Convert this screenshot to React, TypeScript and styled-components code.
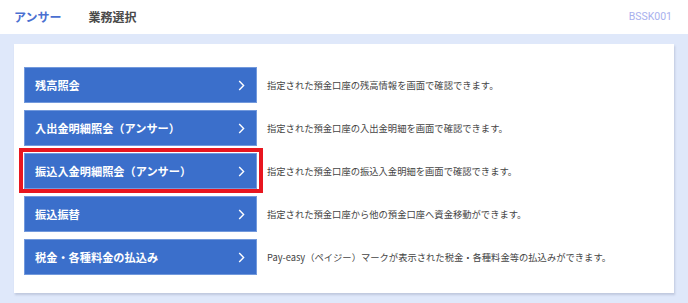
import styled, { createGlobalStyle } from "styled-components";

const GlobalStyle = createGlobalStyle`
  body {
    margin: 0;
    background: #dfe8fa;
    font-family: "Noto Sans CJK JP", "Noto Sans", sans-serif;
  }
`;

const menus = [
  { title: "残高照会", desc: "指定された預金口座の残高情報を画面で確認できます。" },
  { title: "入出金明細照会（アンサー）", desc: "指定された預金口座の入出金明細を画面で確認できます。" },
  {
    title: "振込入金明細照会（アンサー）",
    desc: "指定された預金口座の振込入金明細を画面で確認できます。",
    marked: true,
  },
  { title: "振込振替", desc: "指定された預金口座から他の預金口座へ資金移動ができます。" },
  {
    title: "税金・各種料金の払込み",
    desc: "Pay-easy（ペイジー）マークが表示された税金・各種料金等の払込みができます。",
  },
];

export default function App() {
  return (
    <Page>
      <GlobalStyle />
      <Header>
        <Brand>アンサー</Brand>
        <Title>業務選択</Title>
        <ScreenId>BSSK001</ScreenId>
      </Header>

      <Card>
        {menus.map((m) => (
          <Row key={m.title}>
            <MenuButton $marked={m.marked}>
              <span>{m.title}</span>
              <svg width="7" height="11" viewBox="0 0 7 11">
                <path d="M1.2 1 L5.6 5.5 L1.2 10" fill="none" stroke="#fff" strokeWidth="1.4" />
              </svg>
            </MenuButton>
            <Desc>{m.desc}</Desc>
          </Row>
        ))}
      </Card>
    </Page>
  );
}

const Page = styled.div`
  width: 688px;
  height: 303px;
  overflow: hidden;
`;

const Header = styled.div`
  display: flex;
  align-items: center;
  height: 34px;
  padding: 0 16px 2px 14px;
  box-sizing: border-box;
  background: #fff;
`;

const Brand = styled.div`
  font-size: 12px;
  font-weight: 700;
  color: #4a6fd1;
`;

const Title = styled.div`
  margin-left: 27px;
  font-size: 12px;
  font-weight: 700;
  color: #4a4a4a;
`;

const ScreenId = styled.div`
  margin-left: auto;
  font-family: Roboto, "Noto Sans", sans-serif;
  font-size: 10.5px;
  color: #a8b0ee;
`;

const Card = styled.div`
  display: flex;
  flex-direction: column;
  gap: 7px;
  margin: 10px 14px 0;
  height: 249px;
  padding: 23px 10px 0;
  box-sizing: border-box;
  background: #fff;
  box-shadow: 1px 2px 2px rgba(120, 130, 160, 0.3);
`;

const Row = styled.div`
  display: flex;
  align-items: center;
  gap: 10px;
`;

const MenuButton = styled.div<{ $marked?: boolean }>`
  position: relative;
  display: flex;
  align-items: center;
  justify-content: space-between;
  width: 233px;
  height: 36px;
  flex-shrink: 0;
  padding: 0 11px 0 10px;
  box-sizing: border-box;
  background: #3b6fcb;
  border: 1px solid #7299dc;
  color: #fff;
  font-size: 11.2px;
  font-weight: 700;

  &::after {
    content: "";
    display: ${(p) => (p.$marked ? "block" : "none")};
    position: absolute;
    top: -6px;
    bottom: -5px;
    left: -6px;
    right: -7px;
    border: 4px solid #e8161f;
  }
`;

const Desc = styled.div`
  font-size: 9.3px;
  color: #444;
  white-space: nowrap;
`;
